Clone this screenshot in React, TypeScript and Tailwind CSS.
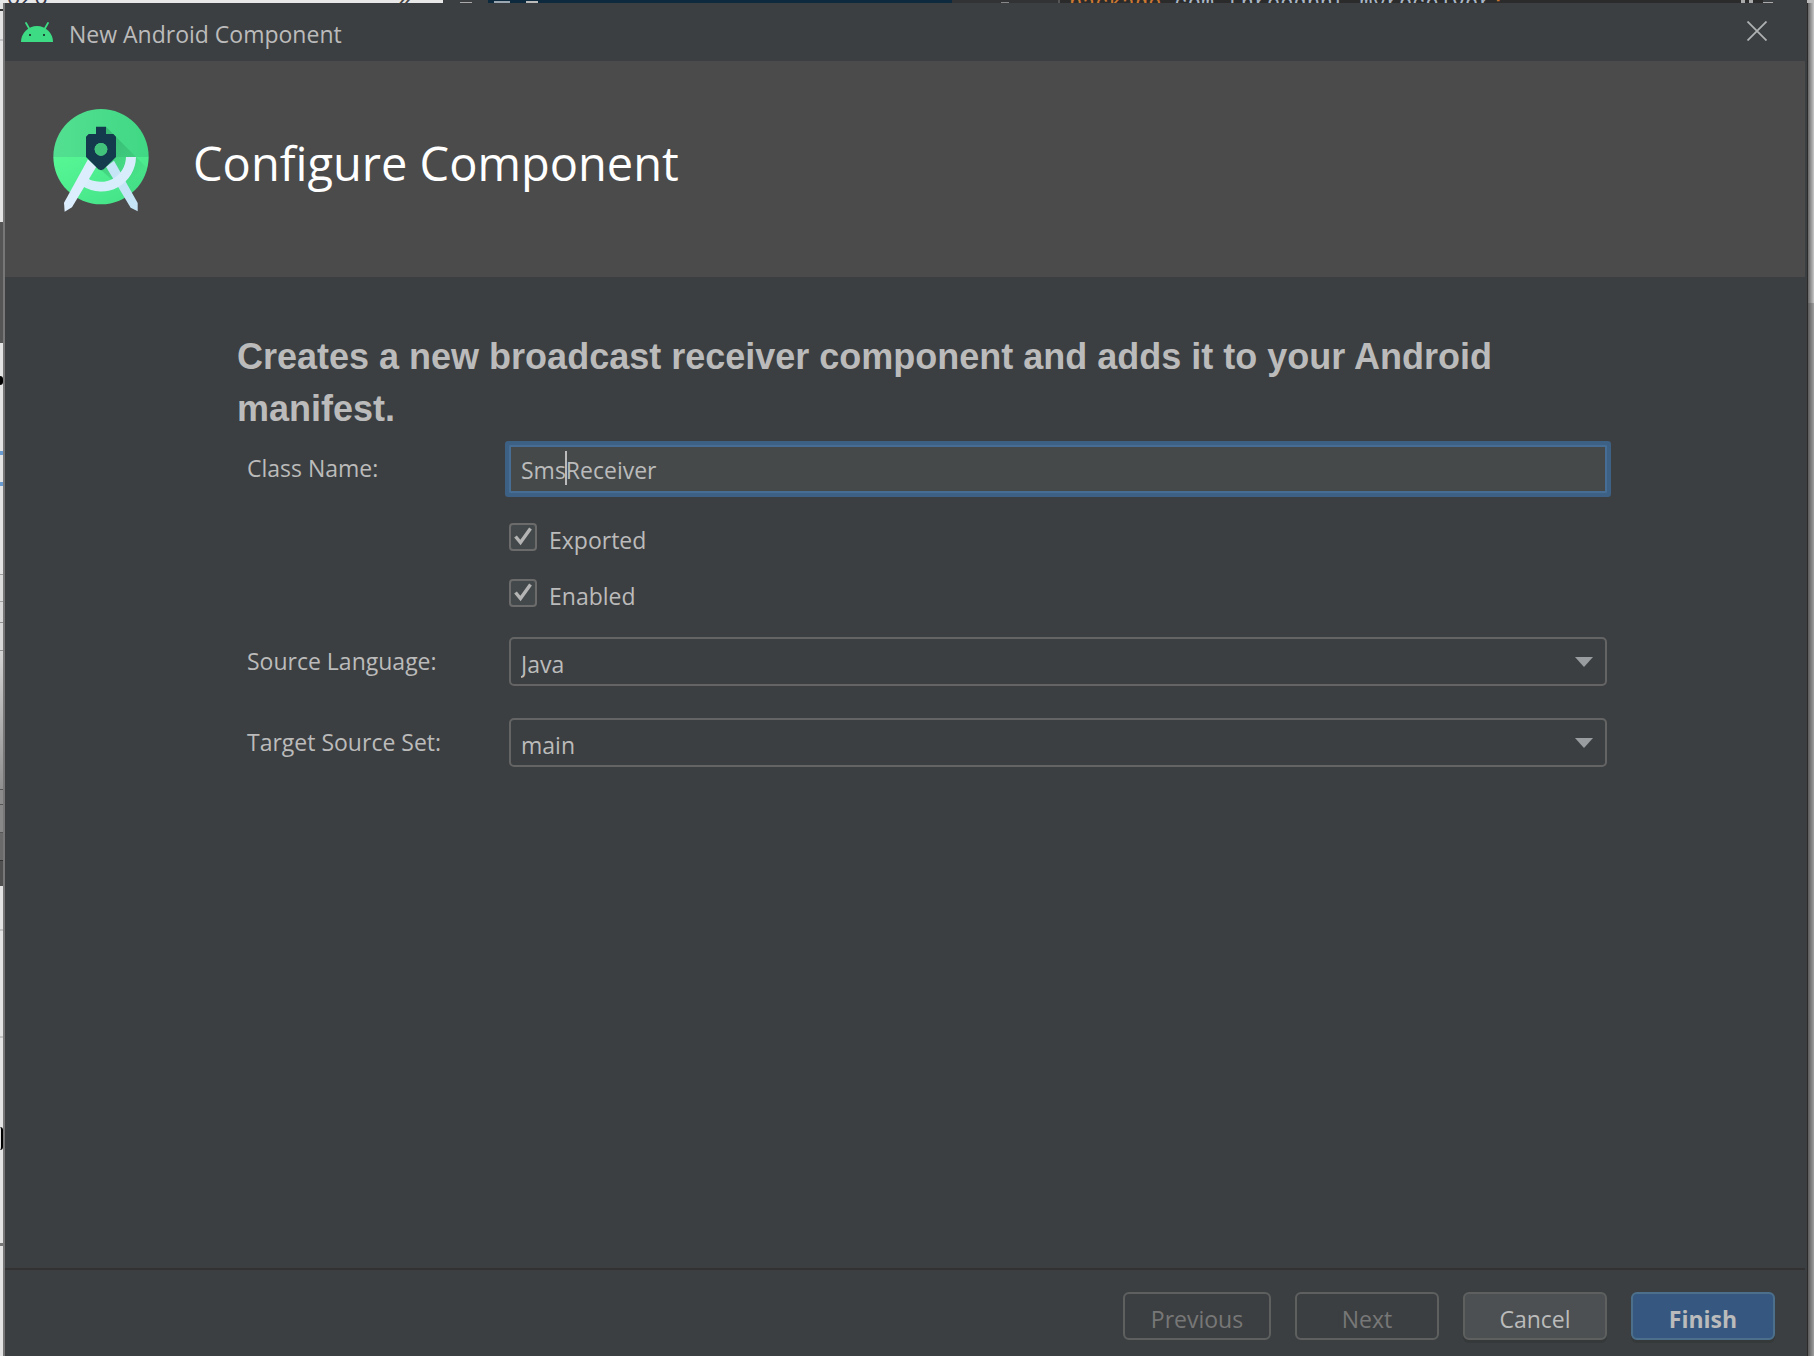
import React from "react";

const focusRing = "shadow-[0_0_0_4px_#3d6185]";

function AndroidHead() {
  return (
    <svg width="32" height="20" viewBox="0 0 32 20" aria-hidden="true">
      <path d="M5 1l4 7M27 1l-4 7" stroke="#3ddc84" strokeWidth="1.8" strokeLinecap="round" />
      <path d="M0 20a16 16 0 0 1 32 0z" fill="#3ddc84" />
      <path d="M8 12h2v2H8zM22 12h2v2h-2z" fill="#1f4a35" />
    </svg>
  );
}

function StudioLogo() {
  return (
    <svg width="96" height="104" viewBox="69 57 288 312" aria-hidden="true">
      <defs>
        <clipPath id="disc">
          <circle cx="213" cy="200" r="143" />
        </clipPath>
        <linearGradient id="shade" x1="220" y1="110" x2="340" y2="240" gradientUnits="userSpaceOnUse">
          <stop offset="0" stopColor="#2b9f62" stopOpacity="0.6" />
          <stop offset="1" stopColor="#2b9f62" stopOpacity="0.1" />
        </linearGradient>
        <linearGradient id="upper" x1="0" y1="0" x2="1" y2="0">
          <stop offset="0" stopColor="#53df91" />
          <stop offset="1" stopColor="#40d884" />
        </linearGradient>
        <linearGradient id="lower" x1="0" y1="0" x2="1" y2="1">
          <stop offset="0" stopColor="#57f795" />
          <stop offset="1" stopColor="#42e087" />
        </linearGradient>
      </defs>
      <g clipPath="url(#disc)">
        <rect x="69" y="57" width="288" height="144" fill="url(#upper)" />
        <rect x="69" y="201" width="288" height="144" fill="url(#lower)" />
        <path d="M228 110L357 240V345H330L213 240z" fill="url(#shade)" />
      </g>
      <path d="M228 230L252 212L323 339V364L302 353z" fill="#c5e4f5" />
      <path d="M288 201H318A105 105 0 0 1 158 289L175 266A76 76 0 0 0 288 201z" fill="#d8edfc" />
      <path d="M174 208L199 230L126 352L104 365L102 338z" fill="#dceefd" />
      <path
        fillRule="evenodd"
        d="M198 110H228V132H250L258 140V201L221 238Q213 243 205 238L168 201V140L176 132H198zM213 159a19 19 0 1 0 0 38a19 19 0 1 0 0-38z"
        fill="#143b4d"
      />
      <circle cx="213" cy="178" r="19" fill="#42c37c" />
    </svg>
  );
}

function CheckRow({ id, label }: { id: string; label: string }) {
  return (
    <div className="flex h-8 items-start gap-3">
      <span className="relative mt-0.5 size-7 shrink-0">
        <input
          id={id}
          type="checkbox"
          defaultChecked
          className="peer block size-7 appearance-none rounded-[4px] border-2 border-[#6b6b6b] bg-[#43494a]"
        />
        <svg
          viewBox="0 0 28 28"
          className="pointer-events-none absolute inset-0 hidden size-7 peer-checked:block"
          fill="none"
          stroke="#b4b4b4"
          strokeWidth="3.4"
          aria-hidden="true"
        >
          <path d="M6.500 13.500L11.500 19.500L21.500 5.500" />
        </svg>
      </span>
      <label htmlFor={id} className="pt-[3px] leading-8">
        {label}
      </label>
    </div>
  );
}

function SelectRow({ id, label, value }: { id: string; label: string; value: string }) {
  return (
    <div className="flex items-center">
      <label htmlFor={id} className="w-[262px] shrink-0 pb-0.5 pl-[10px] leading-8">
        {label}
      </label>
      <div className="relative mr-1 ml-[10px] flex-1">
        <select
          id={id}
          defaultValue={value}
          className="block h-[49px] w-full appearance-none rounded-[5px] border-2 border-[#646464] bg-[#3c3f41] pt-1.5 pl-[10px] text-[#bbbbbb] outline-none"
        >
          <option>{value}</option>
        </select>
        <svg
          width="18"
          height="10"
          viewBox="0 0 18 10"
          className="pointer-events-none absolute top-5 right-[14px]"
          aria-hidden="true"
        >
          <path d="M0 0H18L9 10z" fill="#9a9da0" />
        </svg>
      </div>
    </div>
  );
}

function LeftBackdrop() {
  return (
    <div
      className="flex w-[5px] shrink-0 flex-col overflow-hidden border-r-2 border-[#777777] bg-[#e4e4e4]"
      aria-hidden="true"
    >
      <div className="flex h-[219px] shrink-0 flex-col">
        <div className="mt-[6px] h-[2px] bg-[#333333]" />
        <div className="mt-[28px] h-[2px] bg-[#c4c4c8]" />
      </div>
      <div className="h-[121px] shrink-0 bg-[#555555]" />
      <div className="h-[108px] shrink-0 pt-[33px]">
        <div className="h-[9px] w-[3px] rounded-r bg-black" />
      </div>
      <div className="h-[35px] shrink-0 border-y-4 border-[#6a9bd0]" />
      <div className="h-[89px] shrink-0 border-b border-[#a0a0a0]" />
      <div className="h-[27px] shrink-0 border-b border-[#a0a0a0] bg-[#dcdcdc]" />
      <div className="h-[21px] shrink-0 border-b border-[#909090] bg-[#d8d8d8]" />
      <div className="h-[28px] shrink-0 border-b border-[#909090] bg-[#d8d8d8]" />
      <div className="h-[139px] shrink-0 border-b border-[#555555] bg-linear-to-b from-[#d4d4d4] to-[#909090]" />
      <div className="h-[15px] shrink-0 border-b border-[#555555] bg-[#8c8c8c]" />
      <div className="h-[28px] shrink-0 border-b border-[#555555] bg-[#888888]" />
      <div className="h-[28px] shrink-0 border-b border-[#333333] bg-[#6a6a6a]" />
      <div className="h-[25px] shrink-0 bg-[#505050]" />
      <div className="h-[45px] shrink-0 border-b-2 border-[#c4c4c4]" />
      <div className="h-[107px] shrink-0 border-b-2 border-[#c4c4c4]" />
      <div className="mt-[89px] h-[23px] w-[3px] shrink-0 rounded-r-full border-r-2 border-black" />
      <div className="mt-[93px] h-[3px] shrink-0 bg-[#777777]" />
    </div>
  );
}

function TopBackdrop() {
  return (
    <div className="flex h-[3px] overflow-hidden bg-[#2b2b2b]" aria-hidden="true">
      <div className="relative w-[443px] shrink-0 bg-[#e8e8e8]">
        <span className="absolute bottom-[-5px] left-[-7px] text-[24px] leading-6 text-[#33364a]">2020</span>
        <span className="absolute bottom-[-6px] left-[398px] text-[28px] leading-7 text-[#444444]">»</span>
      </div>
      <div className="flex w-[45px] shrink-0 items-end justify-center bg-[#3c3f41]">
        <span className="h-px w-3 bg-[#aaaaaa]" />
      </div>
      <div className="flex w-[464px] shrink-0 gap-4 bg-[#0d293e] pl-[6px]">
        <span className="mt-px h-[2px] w-4 bg-[#9aa7b0]" />
        <span className="mt-px h-[2px] w-3 bg-[#bbbbbb]" />
      </div>
      <div className="flex w-[108px] shrink-0 justify-center border-r-2 border-[#555555] bg-[#313335]">
        <span className="mt-0.5 h-px w-2 bg-[#888888]" />
      </div>
      <div className="relative flex-1">
        <span className="absolute top-[-7px] left-[9px] font-['Liberation_Mono'] text-[22px] leading-6 whitespace-pre text-[#a9b7c6]">
          <span className="text-[#cc7832]">package</span> com.threedpnt.myreceiver
          <span className="text-[#cc7832]">;</span>
        </span>
      </div>
      <div className="flex w-[50px] shrink-0 gap-1 pl-[28px]">
        <span className="w-1 bg-[#aaaaaa]" />
        <span className="w-1 bg-[#aaaaaa]" />
      </div>
      <div className="flex w-[10px] shrink-0 items-end bg-[#3c3f41]">
        <span className="h-px w-full bg-[#aaaaaa]" />
      </div>
      <div className="w-[34px] shrink-0 bg-[#3c3f41]" />
      <div className="w-[7px] shrink-0 bg-[#bbbbbb]" />
    </div>
  );
}

const plainButton = "h-12 w-36 rounded-[6px] border-2 border-[#5e6060] pt-1.5";

export default function App() {
  return (
    <div className="flex min-h-screen flex-col bg-[#2b2b2b] font-['Open_Sans','Noto_Sans_CJK_KR',sans-serif] text-[23px] text-[#bbbbbb]">
      <TopBackdrop />
      <div className="flex flex-1">
        <LeftBackdrop />
        <main className="flex min-w-0 flex-1 flex-col border-r-2 border-[#3c3f41] bg-[#3c3f41]">
          <div className="flex h-[58px] items-center pr-[38px] pl-4">
            <AndroidHead />
            <h1 className="flex-1 pt-1 pl-4 leading-8">New Android Component</h1>
            <button aria-label="Close" className="mb-0.5 block">
              <svg width="20" height="20" viewBox="0 0 20 20" stroke="#afb1b3" strokeWidth="1.8" aria-hidden="true">
                <path d="M0.500 0.500L19.500 19.500M19.500 0.500L0.500 19.500" />
              </svg>
            </button>
          </div>
          <header className="flex h-[216px] items-start bg-[#4b4b4b] pt-12 pl-12">
            <StudioLogo />
            <h2 className="pt-[18px] pl-11 text-[47px] leading-[72px] text-white">Configure Component</h2>
          </header>
          <form className="flex flex-1 flex-col pt-[54px] pr-[194px] pl-[232px]">
            <p className="font-['Liberation_Sans'] text-[36px] leading-[52px] font-bold">
              Creates a new broadcast receiver component and adds it to your Android manifest.
            </p>
            <div className="mt-[10px] flex items-center">
              <label htmlFor="class-name" className="w-[262px] shrink-0 pb-0.5 pl-[10px] leading-8">
                Class Name:
              </label>
              <div className="relative mr-1 ml-[10px] flex-1">
                <input
                  id="class-name"
                  defaultValue="SmsReceiver"
                  className={`block h-12 w-full rounded-[1px] border-2 border-[#466d94] bg-[#45494a] pt-0.5 pl-[10px] text-[#bbbbbb] outline-none ${focusRing}`}
                />
                <span
                  className="pointer-events-none absolute top-[6px] left-[11px] h-[34px] border-r-2 border-[#bbbbbb] text-transparent"
                  aria-hidden="true"
                >
                  Sms
                </span>
              </div>
            </div>
            <div className="mt-7 flex flex-col gap-6 pl-[272px]">
              <CheckRow id="exported" label="Exported" />
              <CheckRow id="enabled" label="Enabled" />
            </div>
            <div className="mt-7 flex flex-col gap-8">
              <SelectRow id="language" label="Source Language:" value="Java" />
              <SelectRow id="source-set" label="Target Source Set:" value="main" />
            </div>
          </form>
          <footer className="flex h-[88px] items-start justify-end gap-6 border-t-2 border-[#323232] pt-[22px] pr-[30px]">
            <button
              disabled
              className="h-12 w-[148px] rounded-[6px] border-2 border-[#5e6060] pt-1.5 text-[#777777]"
            >
              Previous
            </button>
            <button disabled className={`${plainButton} text-[#777777]`}>
              Next
            </button>
            <button className={`${plainButton} bg-[#4c5052] shadow-[0_3px_0_#36393a]`}>Cancel</button>
            <button className="h-12 w-36 rounded-[6px] border-2 border-[#4c708c] bg-[#365880] pt-1.5 font-bold shadow-[0_3px_0_#36393a]">
              Finish
            </button>
          </footer>
        </main>
        <div className="flex w-[7px] shrink-0 flex-col border-l border-[#2b2b2b] bg-[#858585]" aria-hidden="true">
          <div className="h-[300px] bg-linear-to-r from-[#666666] to-[#c8c8c8]" />
          <div className="flex-1 bg-linear-to-r from-[#5a5a5a] to-[#a0a0a0]" />
        </div>
      </div>
    </div>
  );
}
